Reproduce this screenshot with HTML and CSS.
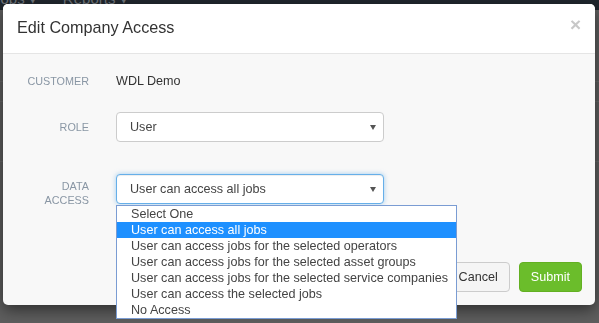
FILE: index.html
```html
<!DOCTYPE html>
<html lang="en">
<head>
  <meta charset="UTF-8" />
  <title>Edit Company Access</title>
  <link rel="stylesheet" href="styles.css">
</head>
<body>
  <div class="navbar">
    <span class="nav-link">Jobs &#9662;</span>
    <span class="nav-link">Reports &#9662;</span>
  </div>

  <div class="page">
    <div class="page-row"></div>
    <div class="page-row"></div>
    <div class="page-row"></div>
  </div>

  <div class="modal">
    <div class="modal-header">
      <h4 class="modal-title">Edit Company Access</h4>
      <span class="close">&times;</span>
    </div>

    <div class="modal-body">
      <div class="form-row">
        <label class="form-label">Customer</label>
        <div class="static-value">WDL Demo</div>
      </div>

      <div class="form-row">
        <label class="form-label">Role</label>
        <div class="select">User<span class="caret"></span></div>
      </div>

      <div class="form-row row-spaced">
        <label class="form-label">Data<br>Access</label>
        <div class="select-wrap">
          <div class="select focused">User can access all jobs<span class="caret"></span></div>
          <ul class="dropdown">
            <li>Select One</li>
            <li class="selected">User can access all jobs</li>
            <li>User can access jobs for the selected operators</li>
            <li>User can access jobs for the selected asset groups</li>
            <li>User can access jobs for the selected service companies</li>
            <li>User can access the selected jobs</li>
            <li>No Access</li>
          </ul>
        </div>
      </div>
    </div>

    <div class="modal-footer">
      <button class="btn btn-default">Cancel</button>
      <button class="btn btn-success">Submit</button>
    </div>
  </div>
</body>
</html>
```

FILE: styles.css
```css
body {
  margin: 0;
  font-family: "Liberation Sans", Arial, sans-serif;
  background-color: #5e5e5e;
  height: 323px;
  overflow: hidden;
}

.navbar {
  height: 10px;
  background-color: #20272e;
  overflow: hidden;
  display: flex;
  gap: 26px;
}

.nav-link {
  font-size: 15px;
  line-height: 15px;
  margin-top: -9px;
  color: #6f757b;
}

.nav-link:first-child {
  margin-left: -7px;
}

.page {
  padding-top: 52px;
}

.page-row {
  height: 19px;
  border-bottom: 1px solid #686868;
}

.page-row:last-child {
  height: 59px;
}

.modal {
  position: fixed;
  top: 4px;
  left: 3px;
  width: 592px;
  height: 301px;
  background-color: #f8f8f8;
  border-radius: 5px;
  box-shadow: 0 5px 15px rgba(0, 0, 0, 0.5);
  display: flex;
  flex-direction: column;
}

.modal-header {
  height: 49px;
  background-color: #fff;
  border-bottom: 1px solid #e5e5e5;
  border-radius: 5px 5px 0 0;
  display: flex;
  align-items: center;
  justify-content: space-between;
  padding: 0 14px;
}

.modal-title {
  margin: 0;
  font-size: 16.2px;
  font-weight: normal;
  color: #333;
  padding-bottom: 2px;
}

.close {
  font-size: 19px;
  font-weight: bold;
  color: #c8c8c8;
  margin-top: -8px;
}

.modal-body {
  flex: 1;
  padding: 12px 0 0 15px;
}

.form-row {
  display: grid;
  grid-template-columns: 71px 268px;
  column-gap: 27px;
  align-items: center;
  margin-bottom: 16px;
}

.row-spaced {
  align-items: start;
  margin-top: 32px;
}

.form-label {
  text-align: right;
  text-transform: uppercase;
  font-size: 10.8px;
  line-height: 14px;
  color: #8996a4;
}

.row-spaced .form-label {
  padding-top: 5px;
}

.static-value {
  height: 30px;
  line-height: 30px;
  font-size: 12.6px;
  color: #333;
}

.select-wrap {
  position: relative;
}

.select {
  position: relative;
  box-sizing: border-box;
  height: 30px;
  line-height: 28px;
  padding-left: 13px;
  font-size: 12.6px;
  color: #444;
  background-color: #fff;
  border: 1px solid #ccc;
  border-radius: 4px;
}

.select.focused {
  border-color: #66afe9;
  box-shadow: inset 0 1px 1px rgba(0, 0, 0, 0.075), 0 0 5px rgba(102, 175, 233, 0.6);
}

.caret {
  position: absolute;
  right: 7px;
  top: 12px;
  border-left: 3px solid transparent;
  border-right: 3px solid transparent;
  border-top: 5px solid #555;
}

.dropdown {
  position: absolute;
  top: 31px;
  left: 0;
  width: 341px;
  box-sizing: border-box;
  margin: 0;
  padding: 0;
  list-style: none;
  background-color: #fff;
  border: 1px solid #7a9cd3;
  font-size: 12.6px;
  color: #444;
  z-index: 10;
}

.dropdown li {
  height: 16px;
  line-height: 16px;
  padding-left: 14px;
  white-space: nowrap;
}

.dropdown li.selected {
  background-color: #1e90ff;
  color: #fff;
}

.modal-footer {
  display: flex;
  justify-content: flex-end;
  gap: 9px;
  padding: 0 13px 13px 0;
}

.btn {
  height: 30px;
  padding: 0 11px;
  font-family: "Liberation Sans", Arial, sans-serif;
  font-size: 12.6px;
  border-radius: 4px;
  border: 1px solid #ccc;
}

.btn-default {
  background-color: #f5f5f5;
  color: #333;
}

.btn-success {
  background-color: #6bbd2b;
  border-color: #63b022;
  color: #fff;
}
```
